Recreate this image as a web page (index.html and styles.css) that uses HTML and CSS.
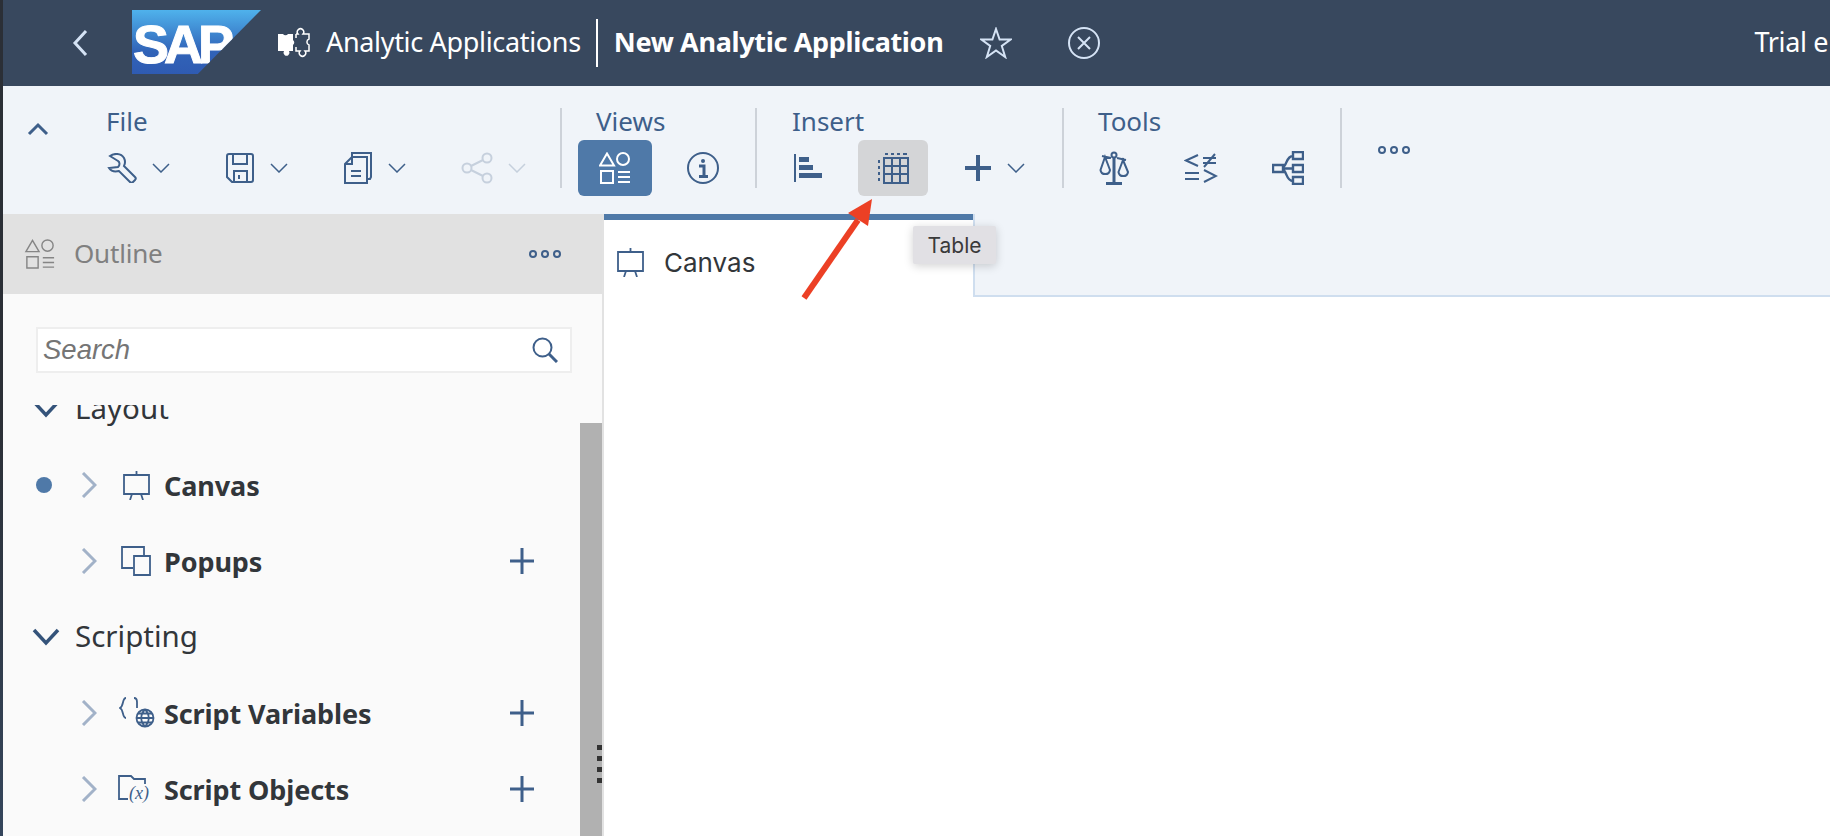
FILE: index.html
```html
<!DOCTYPE html>
<html lang="en">
<head>
  <meta charset="UTF-8">
  <meta name="viewport" content="width=device-width, initial-scale=1.0">
  <title>New Analytic Application</title>
  <link rel="stylesheet" href="styles.css">
</head>
<body>
  <div class="strip"></div>
  <div class="app">
    <header class="shell">
      <svg class="back" width="16" height="28" viewBox="0 0 16 28"><path d="M14 2 3 14l11 12" /></svg>
      <div class="logo">SAP</div>
      <svg class="puzzle" width="32" height="32" viewBox="0 0 32 32">
        <path class="fill" d="M0 7h5a3 3 0 0 0 5 0h5v6a3.500 3.500 0 0 1 0 5v6H11a3 3 0 1 1-5 0H0z"/>
        <path class="line" d="M18 7h2a3.200 3.200 0 1 1 5 0h6v5a3.200 3.200 0 0 0 0 6v6h-4a3.200 3.200 0 1 1-5 0h-4v-4M18 7v4"/>
      </svg>
      <span class="app-name">Analytic Applications</span>
      <span class="shell-sep"></span>
      <span class="doc-name">New Analytic Application</span>
      <svg class="star" width="32" height="32" viewBox="0 0 32 32"><path d="M16 2l3.600 10.500h11L21.800 19l3.400 11L16 23.400 6.800 30l3.400-11L1.400 12.500h11z"/></svg>
      <svg class="close" width="34" height="34" viewBox="0 0 34 34"><circle cx="17" cy="17" r="15"/><path d="M11 11l12 12M23 11 11 23"/></svg>
      <span class="trial">Trial e</span>
    </header>

    <section class="ribbon">
      <button class="collapse">
        <svg width="22" height="14" viewBox="0 0 22 14"><path d="M2 12 11 3l9 9"/></svg>
      </button>

      <div class="group group-file">
        <div class="group-label">File</div>
        <div class="tools">
          <span class="tool tool-menu">
            <svg class="ico" width="30" height="30" viewBox="0 0 30 30"><path d="M3 3C7 0 14 0 17 5c1.500 3 1 6 0 8l11 11c1 1 1 2 0 3l-2 2c-1 1-2 1-3 0L12 18c-4 1-8 0-10-3l9-1c2-2 2-5 0-6z"/></svg>
            <svg class="chev" width="18" height="10" viewBox="0 0 18 10"><path d="M1 1l8 8 8-8"/></svg>
          </span>
          <span class="tool tool-menu">
            <svg class="ico" width="30" height="32" viewBox="0 0 30 32"><path d="M2 4a2 2 0 0 1 2-2h22a2 2 0 0 1 2 2v24a2 2 0 0 1-2 2H7l-5-5zM8 2v10h14V2M9 30V19h13v11M14 23v4"/></svg>
            <svg class="chev" width="18" height="10" viewBox="0 0 18 10"><path d="M1 1l8 8 8-8"/></svg>
          </span>
          <span class="tool tool-menu">
            <svg class="ico" width="30" height="34" viewBox="0 0 30 34"><path d="M9 6V2h19v24l-1 2h-3M2 13l7-7h15v26H2zM9 6v7H2M8 20h10M8 25h10"/></svg>
            <svg class="chev" width="18" height="10" viewBox="0 0 18 10"><path d="M1 1l8 8 8-8"/></svg>
          </span>
          <span class="tool tool-menu is-disabled">
            <svg class="ico" width="32" height="32" viewBox="0 0 32 32"><circle cx="6" cy="16" r="4.500"/><circle cx="26" cy="6" r="4.500"/><circle cx="26" cy="26" r="4.500"/><path d="M10 14l12-6M10 18l12 6"/></svg>
            <svg class="chev" width="18" height="10" viewBox="0 0 18 10"><path d="M1 1l8 8 8-8"/></svg>
          </span>
        </div>
      </div>
      <span class="rb-sep"></span>

      <div class="group group-views">
        <div class="group-label">Views</div>
        <div class="tools">
          <span class="tool is-active">
            <svg class="ico" width="32" height="32" viewBox="0 0 32 32"><path d="M8 1.500l7 12H1zM2 19h12v12H2z"/><circle cx="24" cy="7" r="6"/><path d="M19 20h12M19 25h12M19 30h12"/></svg>
          </span>
          <span class="tool">
            <svg class="ico" width="32" height="32" viewBox="0 0 32 32"><circle cx="16" cy="16" r="15"/><circle class="dot" cx="16" cy="9" r="2"/><path class="thick" d="M12 14h5v10M12 24.500h9"/></svg>
          </span>
        </div>
      </div>
      <span class="rb-sep"></span>

      <div class="group group-insert">
        <div class="group-label">Insert</div>
        <div class="tools">
          <span class="tool">
            <svg class="ico" width="30" height="30" viewBox="0 0 30 30"><path d="M2 1v28"/><path class="solid" d="M6 4h10v5H6zM6 12h14v5H6zM6 20h23v5H6z"/></svg>
          </span>
          <span class="tool is-hover">
            <svg class="ico" width="32" height="32" viewBox="0 0 32 32"><path d="M7 6h24v25H7zM7 14h24M7 22h24M15 6v25M23 6v25" /><path d="M8 2h3M14 2h3M20 2h3M26 2h4M2 8v3M2 14v3M2 20v3M2 26v3"/></svg>
          </span>
          <span class="tool tool-menu tool-plus">
            <svg class="ico plus" width="28" height="28" viewBox="0 0 28 28"><path d="M14 1v26M1 14h26"/></svg>
            <svg class="chev" width="18" height="10" viewBox="0 0 18 10"><path d="M1 1l8 8 8-8"/></svg>
          </span>
        </div>
      </div>
      <span class="rb-sep"></span>

      <div class="group group-tools">
        <div class="group-label">Tools</div>
        <div class="tools">
          <span class="tool">
            <svg class="ico" width="30" height="34" viewBox="0 0 30 34"><circle cx="15" cy="4" r="2.500"/><path class="thick" d="M15 7v25M7 32.500h16"/><path d="M3 5l9 2M18 7l9 2M6 6 1.500 19a4.800 4.800 0 0 0 9.500 0zM24 9l-4.500 12a4.800 4.800 0 0 0 9.500 0z"/></svg>
          </span>
          <span class="tool">
            <svg class="ico" width="34" height="32" viewBox="0 0 34 32"><path d="M14 3 2 8.500 14 14M19 6h13M19 11h13M31 2 20 15M1 21h14M1 27h14M20 18l12 6-12 6"/></svg>
          </span>
          <span class="tool">
            <svg class="ico hier" width="32" height="34" viewBox="0 0 32 34"><path d="M1 14h10v7H1zM21 1h10v7H21zM21 14h10v7H21zM21 26h10v7H21zM11 17.500h10M11 16c4-1 3-11 10-11M11 19c4 1 3 11 10 11"/></svg>
          </span>
        </div>
      </div>
      <span class="rb-sep"></span>

      <button class="more more-ribbon" aria-label="More"><i></i><i></i><i></i></button>
    </section>

    <main class="workspace">
      <aside class="outline">
        <div class="outline-head">
          <svg class="outline-ico" width="32" height="30" viewBox="0 0 32 32"><path d="M8 1.500l7 12H1zM2 19h12v12H2z"/><circle cx="24" cy="7" r="6"/><path d="M19 20h12M19 25h12M19 30h12"/></svg>
          <span class="outline-title">Outline</span>
          <button class="more" aria-label="More"><i></i><i></i><i></i></button>
        </div>
        <div class="search">
          <span class="search-text">Search</span>
          <svg width="26" height="26" viewBox="0 0 26 26"><circle cx="10.500" cy="10.500" r="9"/><path class="thick" d="M17 17l8 8"/></svg>
        </div>
        <div class="tree">
          <div class="tree-list">
            <div class="tree-row section">
              <svg class="open" width="28" height="18" viewBox="0 0 28 18"><path d="M2 2l12 13L26 2"/></svg>
              <span>Layout</span>
            </div>
            <div class="tree-row item">
              <span class="bullet"></span>
              <svg class="twist" width="16" height="26" viewBox="0 0 16 26"><path d="M2 1l12 12L2 25"/></svg>
              <svg class="item-ico" width="30" height="30" viewBox="0 0 30 30"><path d="M3 5h25v19H3zM15.500 1v4M11 24l-2 6M20 24l2 6"/></svg>
              <b>Canvas</b>
            </div>
            <div class="tree-row item">
              <svg class="twist" width="16" height="26" viewBox="0 0 16 26"><path d="M2 1l12 12L2 25"/></svg>
              <svg class="item-ico" width="30" height="30" viewBox="0 0 30 30"><path d="M12 22H1V1h22v9M13 10h16v19H13z"/></svg>
              <b>Popups</b>
              <svg class="add" width="24" height="28" viewBox="0 0 24 28"><path d="M12 1v26M0 14h24"/></svg>
            </div>
            <div class="tree-row section">
              <svg class="open" width="28" height="18" viewBox="0 0 28 18"><path d="M2 2l12 13L26 2"/></svg>
              <span>Scripting</span>
            </div>
            <div class="tree-row item">
              <svg class="twist" width="16" height="26" viewBox="0 0 16 26"><path d="M2 1l12 12L2 25"/></svg>
              <svg class="item-ico ico-vars" width="36" height="32" viewBox="0 0 36 32"><path d="M7 1C3 1 5 9 1 11c4 2 2 10 6 10M15 1c2 0 3 1 3 4v6"/><circle cx="26" cy="21" r="8.500"/><path d="M17.500 21h17M26 12.500c-5 5-5 12 0 17M26 12.500c5 5 5 12 0 17M19 16.500h14M19 25.500h14"/></svg>
              <b>Script Variables</b>
              <svg class="add" width="24" height="28" viewBox="0 0 24 28"><path d="M12 1v26M0 14h24"/></svg>
            </div>
            <div class="tree-row item">
              <svg class="twist" width="16" height="26" viewBox="0 0 16 26"><path d="M2 1l12 12L2 25"/></svg>
              <svg class="item-ico ico-objects" width="38" height="28" viewBox="0 0 38 28"><path d="M10 24H1V1h12l3 3h11v5"/><text x="11" y="24" class="ico-text">(x)</text></svg>
              <b>Script Objects</b>
              <svg class="add" width="24" height="28" viewBox="0 0 24 28"><path d="M12 1v26M0 14h24"/></svg>
            </div>
          </div>
          <div class="scrollbar"><div class="grip"><i></i><i></i><i></i><i></i></div></div>
        </div>
      </aside>

      <section class="stage">
        <div class="tabs">
          <div class="tab">
            <svg class="item-ico" width="30" height="30" viewBox="0 0 30 30"><path d="M3 5h25v19H3zM15.500 1v4M11 24l-2 6M20 24l2 6"/></svg>
            <span>Canvas</span>
          </div>
          <div class="tab-rest"></div>
        </div>
        <div class="tooltip">Table</div>
      </section>
    </main>
  </div>

  <svg class="arrow" width="80" height="110" viewBox="0 0 80 110">
    <path d="M4 102 58 24" />
    <polygon points="72,3 48,17 68,30"/>
  </svg>
</body>
</html>
```

FILE: styles.css
```css
* {
  box-sizing: border-box;
}
html, body {
  height: 100%;
  overflow: hidden;
}
body {
  margin: 0;
  display: flex;
  font-family: "Noto Sans", sans-serif;
  background: #fff;
}
button {
  border: 0;
  background: none;
  padding: 0;
}
svg {
  fill: none;
  stroke: currentColor;
  stroke-width: 2;
  flex: none;
  display: block;
}
.strip {
  width: 3px;
  flex: none;
  background: linear-gradient(#2b2f36, #2b2f36 50%, #35465c);
}
.app {
  flex: 1;
  min-width: 0;
  display: flex;
  flex-direction: column;
}

/* shell bar */
.shell {
  height: 86px;
  flex: none;
  display: flex;
  align-items: center;
  background: #38485e;
  color: #fff;
  white-space: nowrap;
  overflow: hidden;
  font-size: 27px;
  letter-spacing: -.33px;
}
.shell > * {
  flex: none;
}
.back {
  margin-left: 69px;
  color: #d5e3f5;
  stroke-width: 3;
}
.logo {
  width: 129px;
  height: 64px;
  margin-left: 44px;
  margin-top: -2px;
  padding: 7px 0 0 1px;
  clip-path: polygon(0 0, 100% 0, 51% 100%, 0 100%);
  background: linear-gradient(#4fb2ec, #3163b8 65%, #2f5bb2);
  color: #fff;
  font: bold 54px/54px "Liberation Sans", sans-serif;
  letter-spacing: -5px;
  -webkit-text-stroke: 1px #fff;
}
.puzzle {
  margin-left: 17px;
  color: #fff;
  stroke-width: 1.500;
}
.puzzle .fill {
  fill: #fff;
  stroke: none;
}
.app-name {
  margin-left: 16px;
  margin-top: -3px;
}
.shell-sep {
  width: 2px;
  height: 48px;
  margin: 0 16px 0 15px;
  background: #fff;
}
.doc-name {
  font-weight: 700;
  margin-top: -3px;
}
.star {
  margin-left: 37px;
  color: #d5e3f5;
}
.close {
  margin-left: 55px;
  color: #d5e3f5;
}
.trial {
  margin-left: 653px;
  margin-top: -3px;
}

/* ribbon */
.ribbon {
  height: 128px;
  flex: none;
  display: flex;
  background: #f0f4f9;
  color: #3e5f8a;
}
.collapse {
  width: 92px;
  height: 60px;
  flex: none;
  padding: 26px 0 0 24px;
  color: #3e5f8a;
}
.collapse svg {
  stroke-width: 3;
}
.group {
  padding-top: 18px;
}
.group-label {
  font-size: 26px;
  line-height: 34px;
  height: 36px;
}
.group-file .group-label {
  margin-left: -1px;
}
.tools {
  display: flex;
}
.tool {
  height: 56px;
  width: 70px;
  flex: none;
  display: flex;
  align-items: center;
  justify-content: center;
  border-radius: 6px;
}
.tool-menu {
  width: 118px;
  justify-content: flex-start;
  gap: 15px;
}
.tool .chev {
  stroke-width: 1.500;
}
.is-disabled {
  color: #c6d0dd;
}
.is-active {
  background: #4f79a8;
  color: #fff;
  width: 74px;
}
.is-hover {
  background: #d4d5d7;
}
.rb-sep {
  width: 2px;
  height: 80px;
  margin-top: 22px;
  flex: none;
  background: #cdd2d9;
}
.group-file {
  width: 465px;
  padding-left: 12px;
}
.group-views {
  width: 193px;
  padding-left: 16px;
}
.group-views .group-label {
  padding-left: 18px;
}
.group-views .tools {
  gap: 16px;
}
.group-insert {
  width: 305px;
  padding-left: 16px;
}
.group-insert .group-label {
  padding-left: 19px;
}
.group-insert .tools {
  gap: 15px;
}
.tool-plus {
  margin-left: 21px;
  width: 80px;
}
.plus {
  stroke-width: 4;
}
.group-tools {
  width: 276px;
  padding-left: 15px;
}
.group-tools .group-label {
  padding-left: 19px;
}
.group-tools .tools {
  gap: 17px;
}
.hier {
  stroke-width: 2.400;
}
.thick {
  stroke-width: 3;
}
.dot {
  fill: currentColor;
  stroke: none;
}
.solid {
  fill: currentColor;
  stroke: none;
}
.more {
  display: flex;
  gap: 4px;
  color: #3e5f8a;
}
.more i {
  width: 8px;
  height: 8px;
  border: 2px solid currentColor;
  border-radius: 50%;
}
.more-ribbon {
  margin: 60px 0 0 36px;
  align-self: flex-start;
}

/* outline panel */
.workspace {
  flex: 1;
  min-height: 0;
  display: flex;
}
.outline {
  width: 601px;
  flex: none;
  display: flex;
  flex-direction: column;
  background: #fafafa;
  border-right: 2px solid #e2e2e2;
}
.outline-head {
  height: 80px;
  flex: none;
  display: flex;
  align-items: center;
  padding: 0 41px 0 21px;
  background: #e1e1e1;
}
.outline-ico {
  color: #858585;
  stroke-width: 1.500;
}
.outline-title {
  margin-left: 18px;
  margin-top: -2px;
  flex: 1;
  font-size: 26px;
  letter-spacing: -.2px;
  color: #808080;
}
.search {
  height: 46px;
  margin: 33px 30px 32px 33px;
  flex: none;
  display: flex;
  align-items: center;
  justify-content: space-between;
  padding: 0 12px 0 5px;
  background: #fff;
  border: 2px solid #eee;
  color: #3e5f8a;
}
.search-text {
  font: italic 27.500px "Liberation Sans", sans-serif;
  color: #757575;
}
.tree {
  position: relative;
  flex: 1;
  min-height: 0;
  overflow: hidden;
}
.tree-list {
  margin-top: -34px;
}
.tree-row {
  height: 76px;
  display: flex;
  align-items: center;
  white-space: nowrap;
  color: #32363a;
}
.section {
  font-size: 29.500px;
  padding-left: 29px;
  gap: 15px;
}
.section span {
  margin-top: -3px;
}
.open {
  color: #34537a;
  stroke-width: 3.500;
}
.item {
  padding-left: 78px;
  position: relative;
}
.bullet {
  position: absolute;
  left: 33px;
  top: 30px;
  width: 16px;
  height: 16px;
  border-radius: 50%;
  background: #4f79a8;
}
.twist {
  color: #a2b2c8;
  stroke-width: 3;
}
.item-ico {
  color: #3e5f8a;
  margin-left: 24px;
  stroke-width: 1.800;
}
.ico-vars {
  margin-left: 22px;
}
.ico-objects {
  margin-left: 21px;
}
.ico-text {
  font: italic 18px "Liberation Serif", serif;
  fill: currentColor;
  stroke: none;
}
.item b {
  position: absolute;
  left: 161px;
  font-size: 27px;
  letter-spacing: -.1px;
  font-weight: 700;
}
.add {
  position: absolute;
  left: 507px;
  top: 24px;
  color: #3e5f8a;
  stroke-width: 3;
}
.scrollbar {
  position: absolute;
  right: 0;
  top: 18px;
  bottom: 0;
  width: 22px;
  background: #b1b1b1;
}
.grip {
  position: absolute;
  right: 0;
  top: 322px;
  display: flex;
  flex-direction: column;
  gap: 6px;
}
.grip i {
  width: 5px;
  height: 5px;
  background: #333;
}

/* canvas tabs */
.stage {
  position: relative;
  flex: 1;
  min-width: 0;
}
.tabs {
  display: flex;
  height: 83px;
}
.tab {
  width: 369px;
  flex: none;
  display: flex;
  align-items: center;
  padding-top: 7px;
  background: #fff;
  border-top: 6px solid #4f79a8;
  font: 26px Inter, sans-serif;
  color: #32363a;
}
.tab .item-ico {
  margin: 0 19px 0 11px;
}
.tab-rest {
  flex: 1;
  background: #f0f4f9;
  border-left: 2px solid #cfdeef;
  border-bottom: 2px solid #cfdeef;
}
.tooltip {
  position: absolute;
  left: 309px;
  top: 12px;
  width: 83px;
  height: 38px;
  display: flex;
  align-items: center;
  justify-content: center;
  background: #e1e0e4;
  border-radius: 2px;
  box-shadow: 0 2px 10px rgba(0, 0, 0, .18);
  font: 21px Inter, sans-serif;
  color: #3a3a3a;
}

/* annotation drawn on top of the screenshot */
.arrow {
  position: absolute;
  left: 800px;
  top: 196px;
  color: #ec4025;
}
.arrow path {
  stroke-width: 6;
}
.arrow polygon {
  fill: #ec4025;
  stroke: none;
}
```
